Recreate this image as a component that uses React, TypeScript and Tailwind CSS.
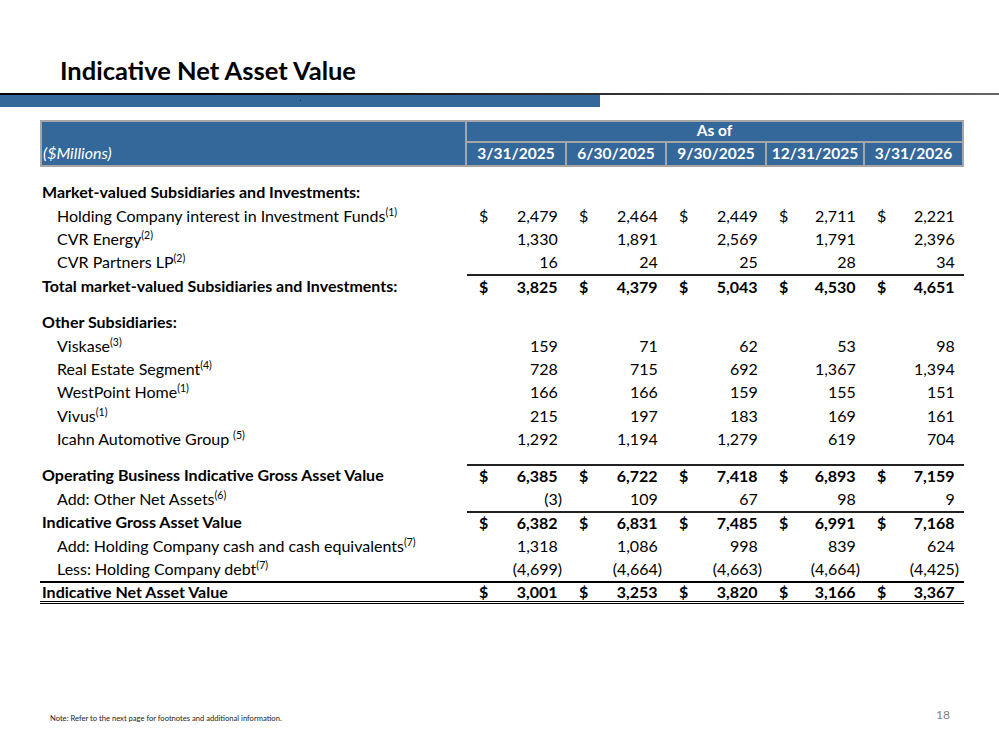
import React from "react";

type Row = {
  label: string;
  sup?: string;
  supGap?: boolean;
  indent?: boolean;
  bold?: boolean;
  dollar?: boolean;
  vals?: string[];
  numTop?: boolean;
  fullTop?: boolean;
  doubleBottom?: boolean;
  gapBefore?: boolean;
};

const colW = ["w-[100px]", "w-[100px]", "w-[100px]", "w-[98px]", "w-[99px]"];
const dates = ["3/31/2025", "6/30/2025", "9/30/2025", "12/31/2025", "3/31/2026"];

const rows: Row[] = [
  { label: "Market-valued Subsidiaries and Investments:", bold: true },
  { label: "Holding Company interest in Investment Funds", sup: "(1)", indent: true, dollar: true, vals: ["2,479", "2,464", "2,449", "2,711", "2,221"] },
  { label: "CVR Energy", sup: "(2)", indent: true, vals: ["1,330", "1,891", "2,569", "1,791", "2,396"] },
  { label: "CVR Partners LP", sup: "(2)", indent: true, vals: ["16", "24", "25", "28", "34"] },
  { label: "Total market-valued Subsidiaries and Investments:", bold: true, dollar: true, numTop: true, vals: ["3,825", "4,379", "5,043", "4,530", "4,651"] },
  { label: "Other Subsidiaries:", bold: true, gapBefore: true },
  { label: "Viskase", sup: "(3)", indent: true, vals: ["159", "71", "62", "53", "98"] },
  { label: "Real Estate Segment", sup: "(4)", indent: true, vals: ["728", "715", "692", "1,367", "1,394"] },
  { label: "WestPoint Home", sup: "(1)", indent: true, vals: ["166", "166", "159", "155", "151"] },
  { label: "Vivus", sup: "(1)", indent: true, vals: ["215", "197", "183", "169", "161"] },
  { label: "Icahn Automotive Group", sup: "(5)", supGap: true, indent: true, vals: ["1,292", "1,194", "1,279", "619", "704"] },
  { label: "Operating Business Indicative Gross Asset Value", bold: true, dollar: true, numTop: true, gapBefore: true, vals: ["6,385", "6,722", "7,418", "6,893", "7,159"] },
  { label: "Add: Other Net Assets", sup: "(6)", indent: true, vals: ["(3)", "109", "67", "98", "9"] },
  { label: "Indicative Gross Asset Value", bold: true, dollar: true, numTop: true, vals: ["6,382", "6,831", "7,485", "6,991", "7,168"] },
  { label: "Add: Holding Company cash and cash equivalents", sup: "(7)", indent: true, vals: ["1,318", "1,086", "998", "839", "624"] },
  { label: "Less: Holding Company debt", sup: "(7)", indent: true, vals: ["(4,699)", "(4,664)", "(4,663)", "(4,664)", "(4,425)"] },
  { label: "Indicative Net Asset Value", bold: true, dollar: true, fullTop: true, doubleBottom: true, vals: ["3,001", "3,253", "3,820", "3,166", "3,367"] },
];

function Num({ v }: { v: string }) {
  const neg = v.startsWith("(");
  return (
    <span>
      {v}
      {!neg && <span className="invisible">)</span>}
    </span>
  );
}

function TableRow({ r }: { r: Row }) {
  return (
    <div
      className={`flex h-[23.4px] items-center ${r.gapBefore ? "mt-[13px]" : ""} ${
        r.fullTop ? "border-t-2 border-[#222]" : ""
      } ${r.doubleBottom ? "border-b-[3px] border-double border-black" : ""}`}
    >
      <div className={`w-[427px] whitespace-nowrap ${r.indent ? "pl-[17px]" : "pl-[2px]"} ${r.bold ? "font-bold" : ""}`}>
        {r.label}
        {r.sup && (
          <sup className={`text-[10.5px] -top-[6px] ${r.supGap ? "ml-[4px]" : ""}`}>{r.sup}</sup>
        )}
      </div>
      {r.vals && (
        <div className={`flex h-full items-center ${r.numTop ? "border-t-2 border-[#222]" : ""}`}>
          {r.vals.map((v, i) => (
            <div key={i} className={`${colW[i]} flex justify-between pl-[12px] pr-[5px] ${r.bold ? "font-bold" : ""}`}>
              <span>{r.dollar ? "$" : ""}</span>
              <Num v={v} />
            </div>
          ))}
        </div>
      )}
    </div>
  );
}

export default function App() {
  return (
    <div className="w-[999px] h-[750px] bg-white text-black flex flex-col font-['Lato','Liberation_Sans',sans-serif]">
      <div className="h-[93px] pl-[60px] pt-[55px] text-[25.5px] font-bold leading-[30px] whitespace-nowrap">
        Indicative Net Asset Value
      </div>
      <div className="h-[1.5px] bg-gradient-to-r from-black via-[#222] to-[#666]" />
      <div className="h-[12px] w-[600px] bg-[#34679a] flex justify-center items-center">
        <span className="block w-[1px] h-[1px] bg-[#1b2b40]" />
      </div>

      <div className="ml-[40px] mt-[13px] w-[924px] text-[16px] leading-none">
        <div className="flex border-2 border-[#a6a6a6] bg-[#34679a] text-white text-[15.5px]">
          <div className="w-[425px] flex items-end pl-[1px] pb-[4px] italic text-[16px]">($Millions)</div>
          <div className="flex flex-col border-l-2 border-[#a6a6a6]">
            <div className="h-[21px] flex items-center justify-center font-bold border-b-2 border-[#a6a6a6]">
              As of
            </div>
            <div className="flex h-[22px]">
              {dates.map((d, i) => (
                <div
                  key={d}
                  className={`${i === 0 ? "w-[98px]" : colW[i]} ${i > 0 ? "border-l-2 border-[#a6a6a6]" : ""} flex items-center justify-center font-bold`}
                >
                  {d}
                </div>
              ))}
            </div>
          </div>
        </div>

        <div className="mt-[14px]">
          {rows.map((r) => (
            <TableRow key={r.label} r={r} />
          ))}
        </div>
      </div>

      <div className="mt-auto flex items-end justify-between pl-[50px] pr-[49px] pb-[26px]">
        <span className="text-[7.6px] text-[#222]">Note: Refer to the next page for footnotes and additional information.</span>
        <span className="text-[12px] text-[#7f7f7f]">18</span>
      </div>
    </div>
  );
}
